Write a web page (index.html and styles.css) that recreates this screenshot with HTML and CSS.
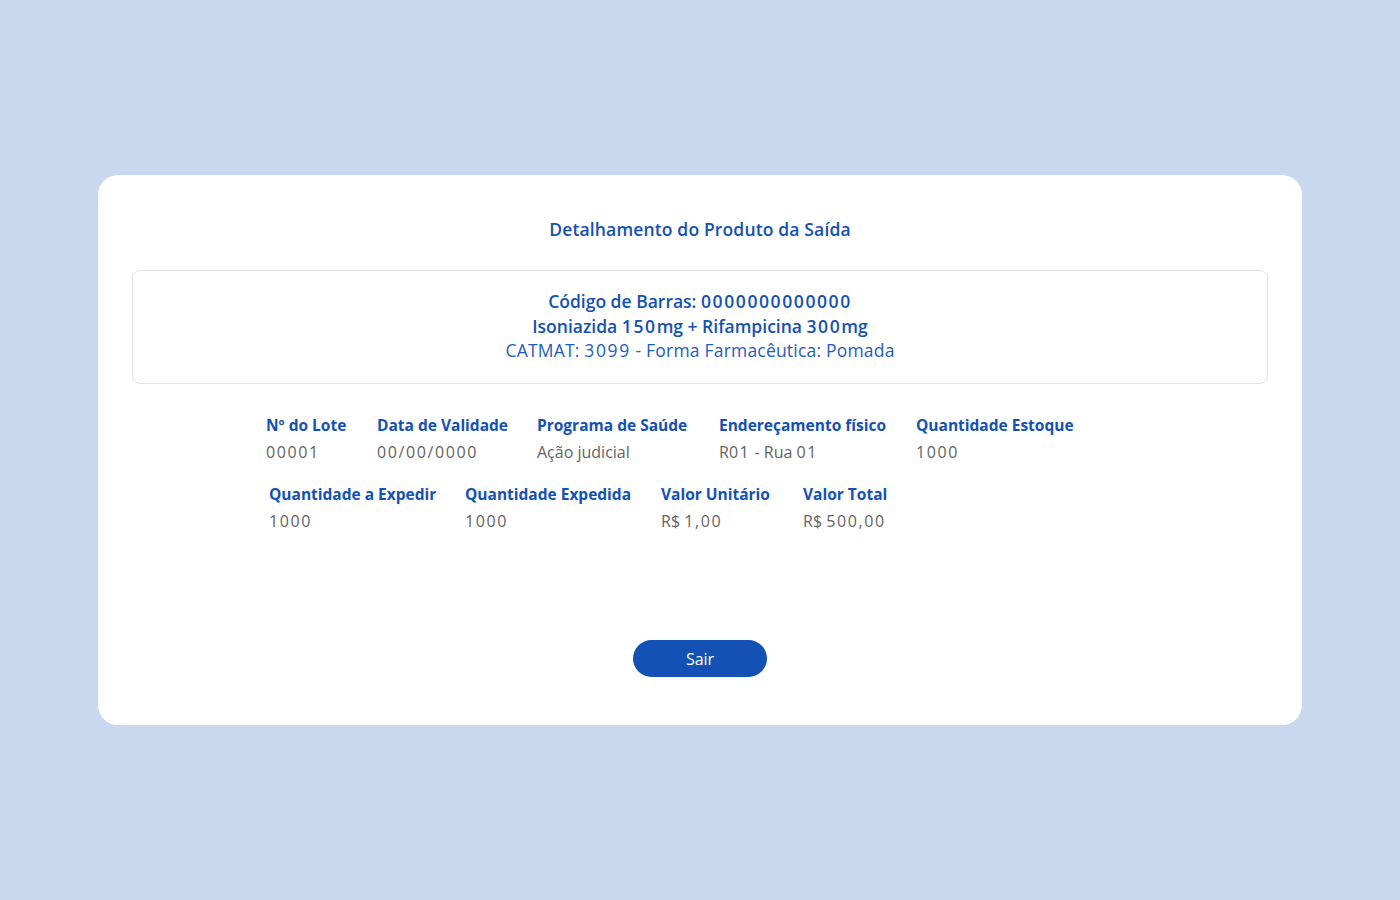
FILE: index.html
```html
<!DOCTYPE html>
<html lang="pt-BR">
<head>
<meta charset="utf-8">
<title>Detalhamento do Produto da Saída</title>
<link rel="stylesheet" href="styles.css">
</head>
<body>
<main class="page">
  <section class="card">
    <h1 class="title">Detalhamento do Produto da Saída</h1>
    <div class="product">
      <div class="product-line strong">Código de Barras: <span class="num">0000000000000</span></div>
      <div class="product-line strong">Isoniazida <span class="num">150</span>mg + Rifampicina <span class="num">300</span>mg</div>
      <div class="product-line light">CATMAT: <span class="num">3099</span> - Forma Farmacêutica: Pomada</div>
    </div>
    <div class="details">
      <div class="row row-1">
        <div class="field"><div class="label">Nº do Lote</div><div class="value num">00001</div></div>
        <div class="field"><div class="label">Data de Validade</div><div class="value num">00/00/0000</div></div>
        <div class="field"><div class="label">Programa de Saúde</div><div class="value">Ação judicial</div></div>
        <div class="field"><div class="label">Endereçamento físico</div><div class="value">R<span class="num">01</span> - Rua <span class="num">01</span></div></div>
        <div class="field"><div class="label">Quantidade Estoque</div><div class="value num">1000</div></div>
      </div>
      <div class="row row-2">
        <div class="field"><div class="label">Quantidade a Expedir</div><div class="value num">1000</div></div>
        <div class="field"><div class="label">Quantidade Expedida</div><div class="value num">1000</div></div>
        <div class="field"><div class="label">Valor Unitário</div><div class="value">R$ <span class="num">1,00</span></div></div>
        <div class="field"><div class="label">Valor Total</div><div class="value">R$ <span class="num">500,00</span></div></div>
      </div>
    </div>
    <div class="actions">
      <button class="btn" type="button">Sair</button>
    </div>
  </section>
</main>
</body>
</html>
```
FILE: styles.css
```css
* { box-sizing: border-box; }
html, body { margin: 0; padding: 0; }
body {
  background: #c9d8ee;
  font-family: "Open Sans", "Lato", sans-serif;
  color: #555;
  width: 1400px;
  height: 900px;
}
.page {
  padding: 175px 98px 0 98px;
}
.card {
  background: #fff;
  border-radius: 20px;
  height: 550px;
  padding: 43px 34px 48px 34px;
  display: flex;
  flex-direction: column;
}
.title {
  margin: 0;
  text-align: center;
  font-size: 17.5px;
  line-height: 22px;
  font-weight: 600;
  color: #1351b4;
  letter-spacing: 0.15px;
}
.product {
  margin-top: 30px;
  border: 1px solid #e3e3e3;
  border-radius: 8px;
  padding: 18px 0 20px;
  text-align: center;
  color: #1351b4;
}
.product-line {
  font-size: 17.5px;
  line-height: 24.5px;
}
.product-line .num { letter-spacing: 1.6px; }
.product-line.strong { font-weight: 600; color: #1351b4; }
.product-line.light { font-weight: 400; color: #1f5cc0; letter-spacing: 0.2px; }
.details {
  margin-top: 31px;
  padding-left: 134px;
}
.row {
  display: grid;
}
.row-1 {
  grid-template-columns: 111px 160px 182px 197px auto;
}
.row-2 {
  margin-top: 22px;
  padding-left: 3px;
  grid-template-columns: 196px 196px 142px auto;
}
.label {
  font-size: 15.5px;
  line-height: 20px;
  font-weight: 700;
  color: #1351b4;
  white-space: nowrap;
}
.value {
  margin-top: 7px;
  font-size: 16px;
  line-height: 20px;
  color: #636363;
  white-space: nowrap;
}
.value.num, .value .num { letter-spacing: 1.6px; }
.actions {
  margin-top: auto;
  display: flex;
  justify-content: center;
}
.btn {
  width: 134px;
  height: 37px;
  border: none;
  border-radius: 19px;
  background: #1351b4;
  color: #fff;
  font-family: inherit;
  font-size: 16px;
  font-weight: 400;
  cursor: pointer;
}
```
